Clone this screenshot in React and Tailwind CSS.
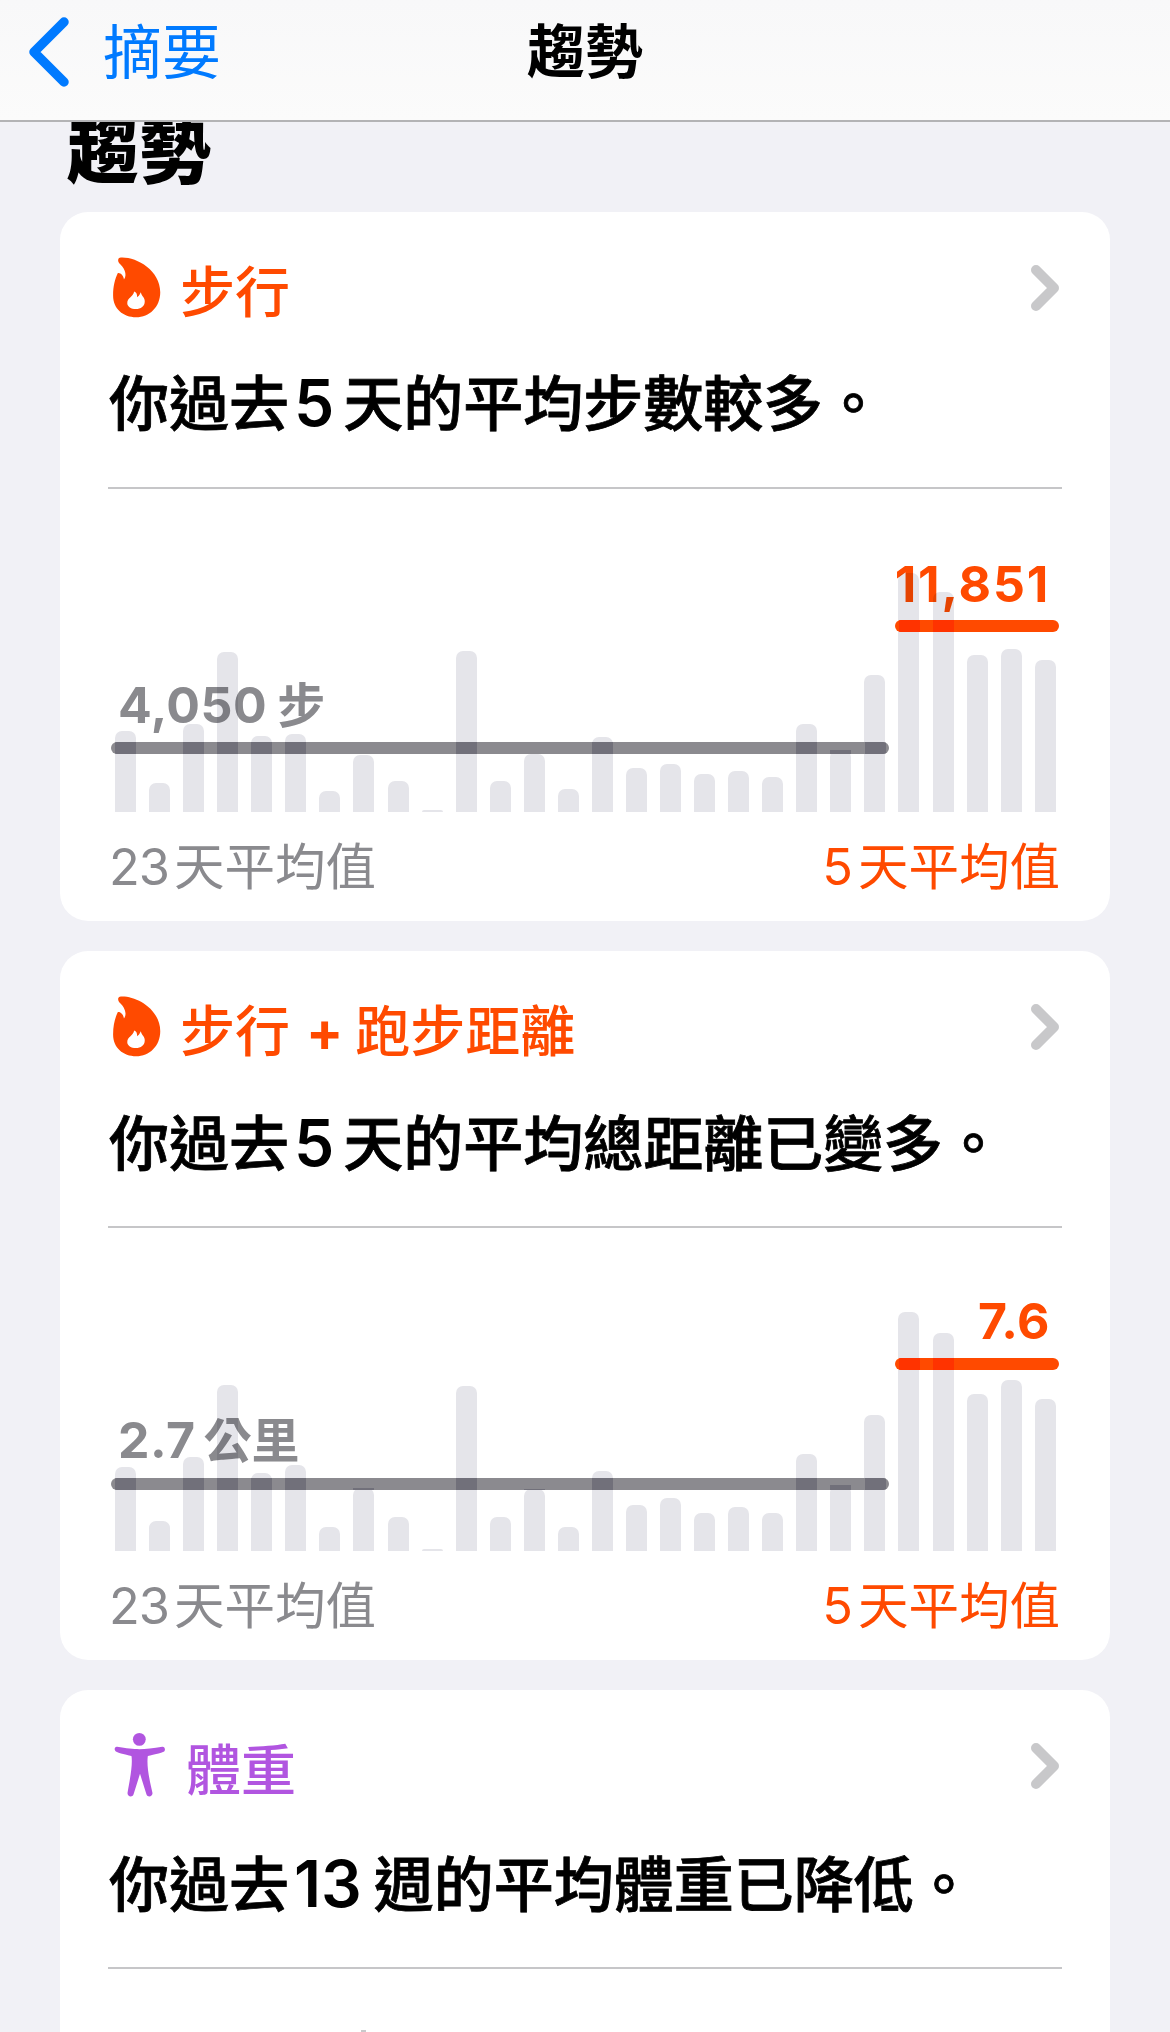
const FONT = "[font-family:Inter,'Noto_Sans_CJK_TC',sans-serif]";

const steps = [81, 29, 88, 160, 76, 78, 21, 57, 31, 2, 161, 31, 58, 23, 75, 44, 48, 38, 41, 35, 88, 62, 137, 239, 220, 157, 163, 152];
const distance = [84, 30, 94, 166, 78, 86, 24, 63, 34, 2, 165, 34, 62, 24, 80, 46, 53, 38, 44, 38, 97, 66, 136, 239, 218, 157, 171, 152];

const BAR_LEFT = 7;
const BAR_PITCH = 34.07;

const Flame = () => (
    <svg viewBox="40 45 145 188" className="w-[48px] h-[62px] -mt-[3px] ml-[5px]">
        <path
            fill="#ff4a00"
            fillRule="evenodd"
            d="M60 50C105 45 183 85 183 155C183 200 150 231 110 231C70 231 40 205 40 165C40 135 46 115 54 97C62 95 71 104 73 116C85 100 72 78 58 66C54 60 54 52 60 50ZM104 153C100 170 83 172 83 188C83 198 95 206 109 206C124 206 136 197 136 183C136 170 128 170 124 155C120 165 116 168 113 170C113 160 110 155 104 153Z"
        />
    </svg>
);

const Figure = () => (
    <svg viewBox="40 42 160 194" className="w-[54px] h-[66px] -mt-[3px] ml-[5px]">
        <circle cx="118" cy="63" r="19" fill="#b155e0" />
        <path
            fill="#b155e0"
            d="M52 85C80 90 100 92 118 92C136 92 160 90 186 85C194 84 197 96 190 100C170 108 150 110 143 113C140 140 145 170 157 222C158 234 142 236 139 226L120 165L101 226C98 236 82 234 83 222C92 170 98 140 95 113C88 110 68 108 50 100C42 96 44 84 52 85Z"
        />
    </svg>
);

const Chevron = () => (
    <svg viewBox="0 0 28 46" className="w-[28px] h-[46px] mr-[3px]">
        <path d="M5 5L23 23L5 41" fill="none" stroke="#c8c8ca" strokeWidth="10" strokeLinecap="round" strokeLinejoin="round" />
    </svg>
);

// Digits run a bit larger than the CJK text around them
const Num = ({ children, className }) => <span className={`text-[64px] font-semibold [-webkit-text-stroke:0px_black] ml-[5px] ${className}`}>{children}</span>;

// Thick average line; bars underneath show through it in a darker shade
const AvgLine = ({ bars, left, width, bottom, className, overlapClass }) => (
    <div
        className={`absolute h-[12px] rounded-full overflow-hidden ${className}`}
        style={{ left, width, bottom }}
    >
        {bars.map((h, i) => {
            if (h <= bottom) return null;
            return (
                <div
                    key={i}
                    className={`absolute bottom-0 w-[21px] ${overlapClass}`}
                    style={{ left: BAR_LEFT + i * BAR_PITCH - left, height: Math.min(12, h - bottom) }}
                />
            );
        })}
    </div>
);

const TrendCard = ({ icon, title, titleClass, text, textClass, ruleClass, children }) => (
    <section className="bg-white rounded-[28px] px-[48px] h-[709px] overflow-hidden shrink-0">
        <div className="flex items-center justify-between h-[62px] mt-[45px]">
            <div className="flex items-center">
                {icon}
                <span className={`text-[55px] leading-[62px] font-medium ml-[19px] pt-[7px] ${titleClass}`}>{title}</span>
            </div>
            <Chevron />
        </div>
        <p className={`text-[60px] leading-[80px] h-[80px] font-medium [-webkit-text-stroke:0.8px_black] text-black ml-[1px] whitespace-nowrap ${textClass}`}>{text}</p>
        <div className={`h-[2px] bg-[#c6c6c8] ${ruleClass}`}></div>
        {children}
    </section>
);

const Chart = ({ bars, avgLabel, avgLabelBottom, avgBottom, recent, recentClass, recentBottom, recentLineBottom }) => (
    <>
        <div className="relative h-[323px]">
            <div className="absolute bottom-0 left-[7px] w-[941px] h-full flex justify-between items-end">
                {bars.map((h, i) => (
                    <div key={i} className="w-[21px] bg-[#e5e5ea] rounded-t-[7px]" style={{ height: h }} />
                ))}
            </div>
            <div
                className="absolute left-[10px] text-[50px] leading-[50px] font-bold tracking-[0.5px] text-[#8a8a8e] mix-blend-multiply whitespace-nowrap"
                style={{ bottom: avgLabelBottom }}
            >
                {avgLabel}
            </div>
            <AvgLine bars={bars.slice(0, 23)} left={3} width={778} bottom={avgBottom} className="bg-[#8b8a8f]" overlapClass="bg-[#71707a]" />
            <div
                className={`absolute right-[12px] text-[50px] leading-[50px] font-bold text-[#ff4a00] mix-blend-multiply whitespace-nowrap ${recentClass}`}
                style={{ bottom: recentBottom }}
            >
                {recent}
            </div>
            <AvgLine bars={bars} left={787} width={164} bottom={recentLineBottom} className="bg-[#ff4a00]" overlapClass="bg-[#ff3300]" />
        </div>
        <div className="flex justify-between text-[50.5px] leading-[60px] mt-[25px] ml-[1px] mr-[2px]">
            <span className="text-[#8a8a8e]"><span className="tracking-[-1px] mr-[5px]">23</span>天平均值</span>
            <span className="text-[#ff4a00]"><span className="mr-[5px]">5</span>天平均值</span>
        </div>
    </>
);

const App = () => {
    return (
        <div className={`w-[1170px] h-[2032px] overflow-hidden flex flex-col bg-[#f1f1f6] ${FONT}`}>

            {/* Nav bar */}
            <header className="h-[122px] shrink-0 bg-gradient-to-b from-[#f8f8f9] to-[#fbfbfb] border-b-2 border-[#b3b3b5] grid grid-cols-[1fr_auto_1fr] pt-[10px]">
                <div className="flex items-start pl-[28px] pt-[6px]">
                    <svg viewBox="0 0 41 72" className="w-[41px] h-[72px]">
                        <path d="M36 6L6 36L36 66" fill="none" stroke="#007aff" strokeWidth="9.5" strokeLinecap="round" strokeLinejoin="round" />
                    </svg>
                    <span className="text-[59px] leading-[80px] text-[#007aff] ml-[34px] -mt-[3px]">摘要</span>
                </div>
                <h2 className="text-[58px] leading-[80px] font-semibold text-black mt-[2px]">趨勢</h2>
                <div></div>
            </header>

            {/* Scrolled content, title slides under the nav */}
            <main className="flex-1 overflow-hidden px-[60px]">
                <h1 className="text-[72px] leading-[72px] h-[72px] font-black text-black -mt-[7px] mb-[25px] ml-[7px]">趨勢</h1>
                <div className="flex flex-col gap-[30px]">
                    <TrendCard
                        icon={<Flame />}
                        title="步行"
                        titleClass="text-[#ff4a00]"
                        text={<>你過去<Num className="mr-[9px]">5</Num>天的平均步數較多。</>}
                        textClass="mt-[44px]"
                        ruleClass="mt-[44px]"
                    >
                        <Chart
                            bars={steps}
                            avgLabel={<>4,050<span className="text-[48px] ml-[10px]">步</span></>}
                            avgLabelBottom={81}
                            avgBottom={58}
                            recent="11,851"
                            recentClass="tracking-[1.8px]"
                            recentBottom={203}
                            recentLineBottom={180}
                        />
                    </TrendCard>
                    <TrendCard
                        icon={<Flame />}
                        title={<>步行<span className="font-bold ml-[16px] mr-[12px]">+</span>跑步距離</>}
                        titleClass="text-[#ff4a00]"
                        text={<>你過去<Num className="mr-[9px]">5</Num>天的平均總距離已變多。</>}
                        textClass="mt-[45px]"
                        ruleClass="mt-[43px]"
                    >
                        <Chart
                            bars={distance}
                            avgLabel={<>2.7<span className="text-[48px] ml-[8px] tracking-normal">公里</span></>}
                            avgLabelBottom={85}
                            avgBottom={61}
                            recent="7.6"
                            recentClass="tracking-[0.5px]"
                            recentBottom={205}
                            recentLineBottom={181}
                        />
                    </TrendCard>
                    <TrendCard
                        icon={<Figure />}
                        title="體重"
                        titleClass="text-[#b155e0]"
                        text={<>你過去<Num className="mr-[12px]">13</Num>週的平均體重已降低。</>}
                        textClass="mt-[47px]"
                        ruleClass="mt-[43px]"
                    >
                        <div className="w-[5px] h-[2px] bg-[#c9c9cb] ml-[253px] mt-[61px]"></div>
                    </TrendCard>
                </div>
            </main>
        </div>
    );
};

export default App;
